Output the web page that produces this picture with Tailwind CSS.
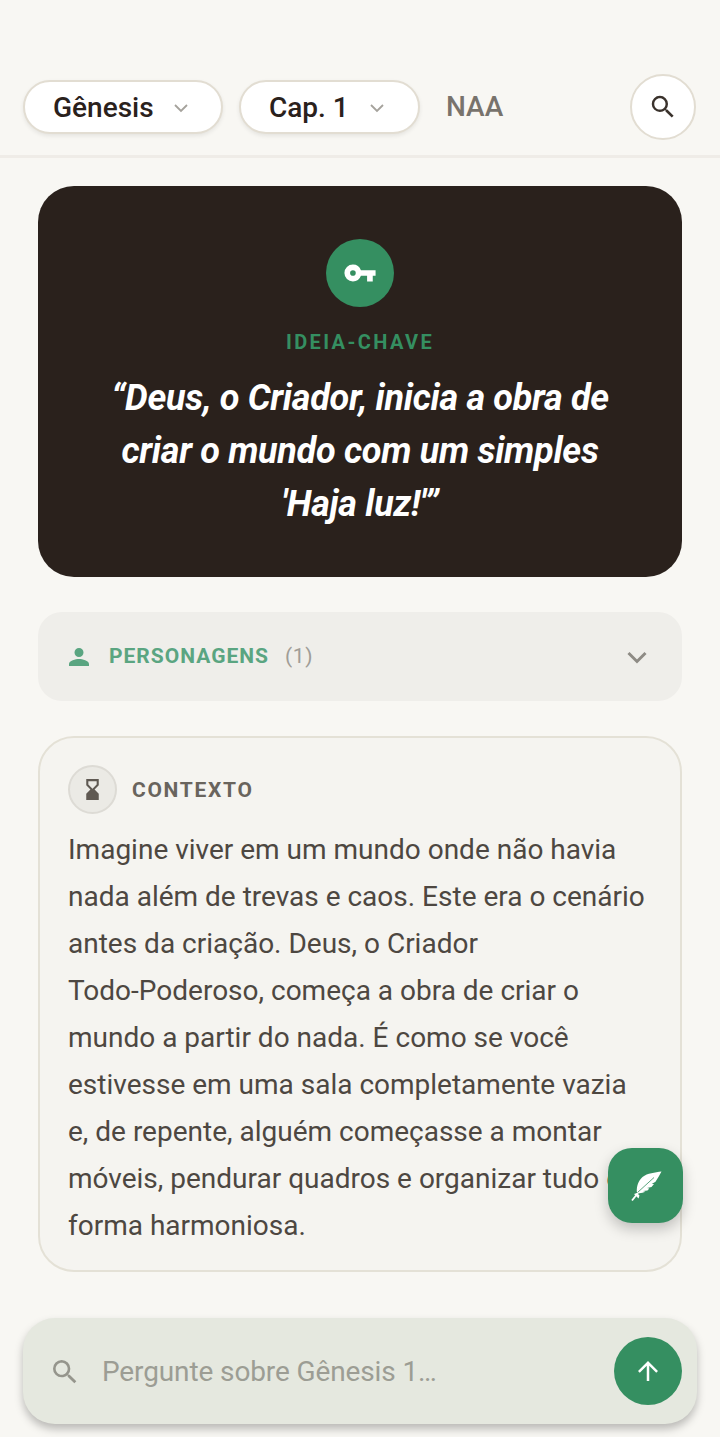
<!DOCTYPE html>
<html lang="pt">
<head>
<meta charset="utf-8">
<script src="https://cdn.jsdelivr.net/npm/@tailwindcss/browser@4"></script>
</head>
<body class="m-0">
<div class="relative w-[720px] h-[1437px] overflow-hidden bg-[#f8f7f3] font-['Roboto',sans-serif] text-[#2a211c]">
  <header class="h-[158px] pt-[74px] pl-[23px] pr-[24px] border-b-[3px] border-[#efece7] flex items-start">
    <div class="mt-[6px] w-[200px] h-[54px] rounded-full bg-white border-2 border-[#e2ddd2] shadow-[0_2px_4px_rgba(0,0,0,0.08)] flex items-center pl-[28px] pt-[1px]">
      <span class="text-[28px] font-medium leading-none w-[120px]">Gênesis</span>
      <svg class="w-[16px] h-[16px]" viewBox="0 0 16 16" fill="none" stroke="#a5a29c" stroke-width="1.8"><path d="M2 5l6 6 6-6"/></svg>
    </div>
    <div class="mt-[6px] ml-[16px] w-[181px] h-[54px] rounded-full bg-white border-2 border-[#e2ddd2] shadow-[0_2px_4px_rgba(0,0,0,0.08)] flex items-center pl-[28px] pt-[1px]">
      <span class="text-[28px] font-medium leading-none w-[100px]">Cap. 1</span>
      <svg class="w-[16px] h-[16px]" viewBox="0 0 16 16" fill="none" stroke="#a5a29c" stroke-width="1.8"><path d="M2 5l6 6 6-6"/></svg>
    </div>
    <span class="mt-[6px] ml-[26px] h-[54px] flex items-center text-[28px] font-medium text-[#78736c]">NAA</span>
    <div class="ml-auto w-[66px] h-[66px] rounded-full bg-white border-2 border-[#e2ddd2] flex items-center justify-center">
      <svg class="w-[30px] h-[30px]" viewBox="0 0 24 24" fill="#3a322c"><path d="M15.5 14h-.79l-.28-.27A6.47 6.47 0 0 0 16 9.5 6.5 6.5 0 1 0 9.5 16c1.61 0 3.09-.59 4.23-1.57l.27.28v.79l5 4.99L20.49 19l-4.99-5zm-6 0C7.01 14 5 11.99 5 9.5S7.01 5 9.5 5 14 7.01 14 9.5 11.99 14 9.500 14z"/></svg>
    </div>
  </header>

  <main class="px-[38px] pt-[28px]">
    <section class="h-[391px] rounded-[36px] bg-[#2a211c] pt-[53px] flex flex-col items-center">
      <div class="w-[68px] h-[68px] rounded-full bg-[#358f61] flex items-center justify-center">
        <svg class="w-[34px] h-[34px]" viewBox="0 0 24 24" fill="#fff"><path d="M12.65 10A6 6 0 0 0 7 6a6 6 0 0 0 0 12 6 6 0 0 0 5.65-4H17v4h4v-4h2v-4H12.65zM7 14a2 2 0 1 1 0-4 2 2 0 0 1 0 4z"/></svg>
      </div>
      <div class="mt-[23px] text-[20px] leading-[24px] font-bold tracking-[2.4px] text-[#358f61]">IDEIA-CHAVE</div>
      <p class="mt-[18px] w-[600px] text-center text-[36px] leading-[53px] font-bold italic text-white tracking-[-0.3px]">“Deus, o Criador, inicia a obra de<br>criar o mundo com um simples<br>'Haja luz!'”</p>
    </section>

    <section class="mt-[35px] h-[89px] rounded-[24px] bg-[#efeeea] flex items-center pl-[29px] pr-[33px]">
      <svg class="w-[24px] h-[24px]" viewBox="0 0 24 24" fill="#5aa581"><path d="M12 12a4.5 4.5 0 1 0 0-9 4.5 4.5 0 0 0 0 9zm0 2c-3.3 0-10 1.7-10 5v2h20v-2c0-3.3-6.700-5-10-5z"/></svg>
      <span class="ml-[18px] text-[21px] font-bold tracking-[1px] text-[#5aa581]">PERSONAGENS</span>
      <span class="ml-[16px] text-[21px] tracking-[0.6px] text-[#a09d97]">(1)</span>
      <svg class="ml-auto w-[24px] h-[24px]" viewBox="0 0 24 24" fill="none" stroke="#8e8b85" stroke-width="3"><path d="M3.500 8l8.500 8.500L20.500 8"/></svg>
    </section>

    <section class="mt-[35px] h-[536px] rounded-[36px] bg-[#f5f4f0] border-2 border-[#e4e1d6] pl-[28px] pt-[27px]">
      <div class="flex items-center">
        <div class="w-[49px] h-[49px] rounded-full bg-[#ebeae5] border-2 border-[#dddbd5] flex items-center justify-center">
          <svg class="w-[25px] h-[25px]" viewBox="0 0 24 24" fill="#5f5952"><path d="M6 2v6l4 4-4 4v6h12v-6l-4-4 4-4V2H6zm2 2h8v3.200l-4 4-4-4V4z"/></svg>
        </div>
        <span class="ml-[15px] pt-[2px] text-[21px] font-bold tracking-[1.7px] text-[#69645d]">CONTEXTO</span>
      </div>
      <p class="mt-[12px] w-[600px] text-[28px] leading-[47px] text-[#4d4741]">Imagine viver em um mundo onde não havia<br>nada além de trevas e caos. Este era o cenário<br>antes da criação. Deus, o Criador<br>Todo-Poderoso, começa a obra de criar o<br>mundo a partir do nada. É como se você<br>estivesse em uma sala completamente vazia<br>e, de repente, alguém começasse a montar<br>móveis, pendurar quadros e organizar tudo de<br>forma harmoniosa.</p>
    </section>
  </main>

  <div class="absolute left-[608px] top-[1148px] w-[75px] h-[75px] rounded-[24px] bg-[#358f61] shadow-[0_6px_14px_rgba(0,0,0,0.22)] flex items-center justify-center">
    <svg class="w-[36px] h-[36px]" viewBox="0 0 36 36" fill="#fff"><path d="M33.500 3.500C27 4.500 19.500 5 14.500 9 10.500 12.500 8.500 18 8.800 24l1.200 1.200c2.500.3 5-.2 7.500-1.400l-2.500-.8 4.500-.6 1.800-1.800-2.300-.5 4.500-1 2.500-3-2.300-.1 3.800-2.300C29.500 10.500 31.800 7 33.500 3.500z"/><path d="M9.500 24.500L26 9.500" stroke="#358f61" stroke-width="0.8" fill="none"/><path d="M10 25l-6 7.500" stroke="#fff" stroke-width="1.800" fill="none"/><path d="M6 26l4.500 4.500 1-3-2.500-2.500z" fill="#fff"/></svg>
  </div>

  <div class="absolute left-[23px] top-[1318px] w-[674px] h-[106px] rounded-[32px] bg-[#e5e8df] shadow-[0_5px_9px_rgba(0,0,0,0.25)] flex items-center pl-[26px] pr-[15px]">
    <svg class="w-[32px] h-[32px] mt-[1px]" viewBox="0 0 24 24" fill="#95958c"><path d="M15.500 14h-.79l-.28-.27A6.470 6.470 0 0 0 16 9.500 6.500 6.500 0 1 0 9.500 16c1.610 0 3.090-.59 4.230-1.570l.27.28v.79l5 4.990L20.490 19l-4.990-5zm-6 0C7.010 14 5 11.990 5 9.500S7.010 5 9.500 5 14 7.010 14 9.500 11.990 14 9.500 14z"/></svg>
    <span class="ml-[21px] pt-[2px] text-[28px] tracking-[-0.12px] text-[#9c9d94]">Pergunte sobre Gênesis 1…</span>
    <div class="ml-auto w-[68px] h-[68px] rounded-full bg-[#358f61] flex items-center justify-center">
      <svg class="w-[30px] h-[30px]" viewBox="0 0 24 24" fill="#fff"><path d="M4 12l1.410 1.410L11 7.830V20h2V7.830l5.580 5.590L20 12l-8-8-8 8z"/></svg>
    </div>
  </div>
</div>
</body>
</html>
